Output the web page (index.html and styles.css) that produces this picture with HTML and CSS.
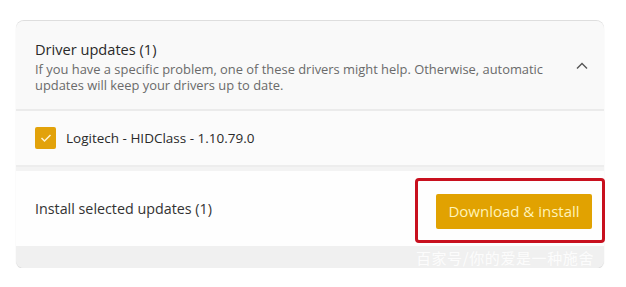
FILE: index.html
```html
<!DOCTYPE html>
<html>
<head>
<meta charset="utf-8">
<link rel="stylesheet" href="styles.css">
</head>
<body>
<div class="panel">
  <div class="header">
    <div class="htext">
      <div class="title">Driver updates (1)</div>
      <div class="desc">If you have a specific problem, one of these drivers might help. Otherwise, automatic updates will keep your drivers up to date.</div>
    </div>
    <svg class="chev" width="12" height="8" viewBox="0 0 12 8"><path d="M1 6.5 L6 1.5 L11 6.5" fill="none" stroke="#555" stroke-width="1.4"/></svg>
  </div>
  <div class="item">
    <span class="check"><svg width="12" height="10" viewBox="0 0 12 10"><path d="M1.5 5 L4.5 8 L10.5 2" fill="none" stroke="#fff3d0" stroke-width="1.5"/></svg></span>
    <span class="itemtext">Logitech - HIDClass - 1.10.79.0</span>
  </div>
  <div class="install">
    <span class="label">Install selected updates (1)</span>
    <div class="hl">
      <button class="btn">Download &amp; install</button>
    </div>
  </div>
  <div class="band"><span class="wm">百家号/你的爱是一种施舍</span></div>
</div>
</body>
</html>
```
FILE: styles.css
```css
html, body { margin: 0; padding: 0; background: #fff; }
body { padding: 21px 0 0 16px; font-family: "Open Sans", "Noto Sans", sans-serif; color: #1f1f1f; }
.panel {
  width: 588px;
  border-radius: 8px;
  background: #f3f3f3;
  box-shadow: 0 1px 1px #d2d2d2, 0 -1px 0 #dedede;
}
.header {
  display: flex;
  align-items: center;
  justify-content: space-between;
  background: #f9f9f9;
  border-radius: 8px 8px 0 0;
  padding: 14px 16px 14px 19px;
  height: 60px;
  border-bottom: 2px solid #ebebeb;
}
.title { font-size: 14.6px; color: #2a2a2a; line-height: 19px; margin-top: 2px; margin-bottom: 2px; }
.desc { font-size: 12.9px; color: #6a6a6a; line-height: 16px; width: 520px; }
.chev { margin-top: 1px; }
.item {
  display: flex;
  align-items: center;
  height: 54px;
  background: #fbfbfb;
  padding-left: 19px;
  border-bottom: 2px solid #ededed;
}
.check {
  width: 21px; height: 22px;
  background: #e2a20a;
  border-radius: 2px;
  display: flex; align-items: center; justify-content: center;
  margin-right: 10px;
}
.itemtext { font-size: 13.5px; color: #2a2a2a; }
.install {
  margin-top: 4px;
  display: flex;
  align-items: center;
  justify-content: space-between;
  height: 75px;
  background: #fefefe;
  padding-left: 19px;
}
.label { font-size: 14.3px; color: #333; }
.hl {
  width: 190px;
  height: 65px;
  border: 3px solid #c8101e;
  border-radius: 4px;
  margin-right: -1px;
  margin-top: 3px;
  display: flex;
  align-items: center;
  justify-content: flex-end;
  padding-right: 10px;
  box-sizing: border-box;
}
.btn {
  width: 156px; height: 35px;
  margin-top: 2px;
  background: #e1a201;
  border: none;
  border-radius: 2px;
  color: #fff3b8;
  font-family: "Open Sans", "Noto Sans", sans-serif;
  font-size: 15px;
  padding: 0;
}
.band {
  height: 22px;
  background: #f0f0f0;
  border-radius: 0 0 8px 8px;
  display: flex;
  justify-content: flex-end;
  align-items: center;
}
.wm { font-family: "Noto Sans CJK SC", sans-serif; font-size: 15px; color: rgba(255,255,255,0.85); margin-right: 10px; letter-spacing: 0.6px; }
```
